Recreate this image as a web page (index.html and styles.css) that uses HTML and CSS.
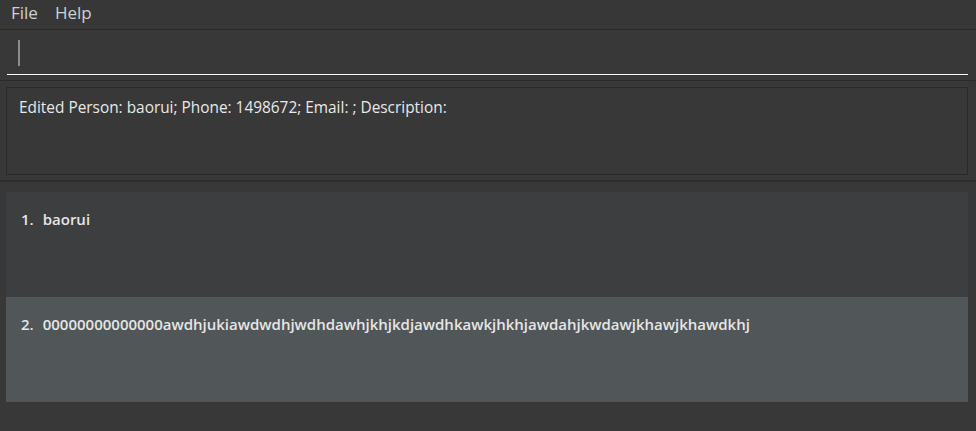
FILE: index.html
```html
<!DOCTYPE html>
<html>
<head>
<meta charset="utf-8">
<link rel="stylesheet" href="styles.css">
</head>
<body>
<div class="app">
  <nav class="menubar">
    <span class="menu-item">File</span>
    <span class="menu-item">Help</span>
  </nav>
  <section class="command">
    <div class="command-field"><span class="caret"></span></div>
  </section>
  <section class="result">
    <div class="result-box">Edited Person: baorui; Phone: 1498672; Email: ; Description:</div>
  </section>
  <section class="list">
    <div class="card card-odd"><span class="idx">1.</span><span class="name">baorui</span></div>
    <div class="card card-sel"><span class="idx">2.</span><span class="name">00000000000000awdhjukiawdwdhjwdhdawhjkhjkdjawdhkawkjhkhjawdahjkwdawjkhawjkhawdkhj</span></div>
  </section>
</div>
</body>
</html>
```
FILE: styles.css
```css
html, body {
  margin: 0;
  padding: 0;
  background: #383838;
  height: 100%;
  overflow: hidden;
}
.app {
  font-family: "Open Sans", "Noto Sans", sans-serif;
  color: #e6e6e6;
  display: flex;
  flex-direction: column;
}
.menubar {
  height: 30px;
  background: #373737;
  border-bottom: 1px solid #2b2b2b;
  display: flex;
  align-items: center;
  padding: 0 0 4px 11px;
  gap: 17px;
  box-sizing: border-box;
}
.menu-item {
  font-size: 17px;
  color: #d0d0d0;
  line-height: 1;
}
.command {
  height: 51px;
  background: #383838;
  border-bottom: 1px solid #2b2b2b;
  padding: 0 8px 0 7px;
  box-sizing: border-box;
}
.command-field {
  height: 45px;
  border-bottom: 1px solid #ffffff;
  display: flex;
  align-items: center;
  padding-left: 11px;
  box-sizing: border-box;
  padding-top: 1px;
}
.caret {
  width: 2px;
  height: 26px;
  background: #8c8c8c;
}
.result {
  height: 101px;
  border-bottom: 2px solid #2b2b2b;
  padding: 6px 8px 0 6px;
  box-sizing: border-box;
}
.result-box {
  height: 88px;
  border: 1px solid #2a2a2a;
  box-sizing: border-box;
  padding: 9px 12px;
  font-size: 15.4px;
  color: #e8e8e8;
}
.list {
  padding: 10px 8px 0 6px;
  display: flex;
  flex-direction: column;
}
.card {
  height: 105px;
  padding: 17px 15px;
  box-sizing: border-box;
  font-size: 15px;
  font-weight: 600;
  color: #e6e6e6;
  display: flex;
  gap: 9px;
}
.card-odd { background: #3c3e40; }
.card-sel { background: #515658; }
```
